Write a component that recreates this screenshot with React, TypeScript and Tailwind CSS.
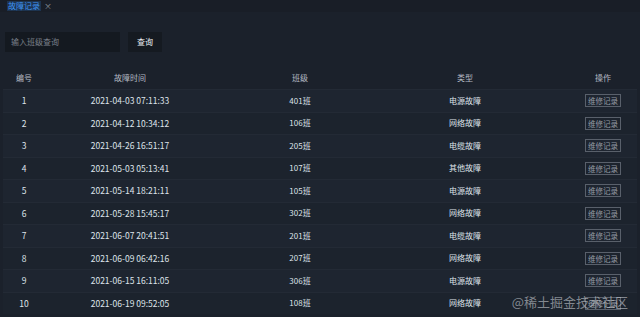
const rows = [
  { id: 1, time: '2021-04-03 07:11:33', cls: '401班', type: '电源故障' },
  { id: 2, time: '2021-04-12 10:34:12', cls: '106班', type: '网络故障' },
  { id: 3, time: '2021-04-26 16:51:17', cls: '205班', type: '电缆故障' },
  { id: 4, time: '2021-05-03 05:13:41', cls: '107班', type: '其他故障' },
  { id: 5, time: '2021-05-14 18:21:11', cls: '105班', type: '电源故障' },
  { id: 6, time: '2021-05-28 15:45:17', cls: '302班', type: '网络故障' },
  { id: 7, time: '2021-06-07 20:41:51', cls: '201班', type: '电缆故障' },
  { id: 8, time: '2021-06-09 06:42:16', cls: '207班', type: '网络故障' },
  { id: 9, time: '2021-06-15 16:11:05', cls: '306班', type: '电源故障' },
  { id: 10, time: '2021-06-19 09:52:05', cls: '108班', type: '网络故障' },
];

const cols = 'grid grid-cols-[42px_170px_170px_160px_24px_68px] items-center';

export default function App() {
  return (
    <div
      className="relative w-[640px] h-[317px] overflow-hidden bg-[#1b212b] text-[8px] text-[#dfe3ea]"
      style={{ fontFamily: '"Noto Sans CJK SC", "Noto Sans", sans-serif' }}
    >
      {/* tab bar */}
      <div className="flex h-[12px] items-center bg-[#191e27] pl-[7px]">
        <span className="bg-[#1d3450] px-[1px] text-[8px] leading-[10px] text-[#3f95f2]">故障记录</span>
        <span className="ml-[3px] text-[8px] leading-[10px] text-[#8c929b]">×</span>
      </div>

      {/* search */}
      <div className="mt-[20px] flex items-center gap-[8px] pl-[5px]">
        <div className="flex h-[20px] w-[115px] items-center bg-[#141920] pl-[6px] text-[8px] text-[#7a8089]">
          输入班级查询
        </div>
        <div className="flex h-[20px] w-[34px] items-center justify-center bg-[#151a21] text-[8px] text-[#eef1f5]">
          查询
        </div>
      </div>

      {/* table */}
      <div className="mx-[3px] mt-[15px]">
        <div className={`${cols} h-[22px] text-[#b4bac3]`}>
          <div className="text-center">编号</div>
          <div className="text-center">故障时间</div>
          <div className="text-center">班级</div>
          <div className="text-center">类型</div>
          <div />
          <div className="text-center">操作</div>
        </div>
        {rows.map((r, i) => (
          <div
            key={r.id}
            className={`${cols} h-[22.5px] border-t border-[#232a35] ${i % 2 === 0 ? 'bg-[#1e2530]' : 'bg-[#1c232d]'}`}
          >
            <div className="text-center text-[8.5px]">{r.id}</div>
            <div className="text-center text-[8.5px]">{r.time}</div>
            <div className="text-center">{r.cls}</div>
            <div className="text-center">{r.type}</div>
            <div />
            <div className="flex justify-center">
              <span className="border border-[#59606b] px-[2px] text-[7.5px] leading-[11px] text-[#959ba4]">
                维修记录
              </span>
            </div>
          </div>
        ))}
      </div>

      <div className="absolute right-[12px] bottom-[6px] text-[13px] text-[#c9cdd3]/60">@稀土掘金技术社区</div>
    </div>
  );
}
